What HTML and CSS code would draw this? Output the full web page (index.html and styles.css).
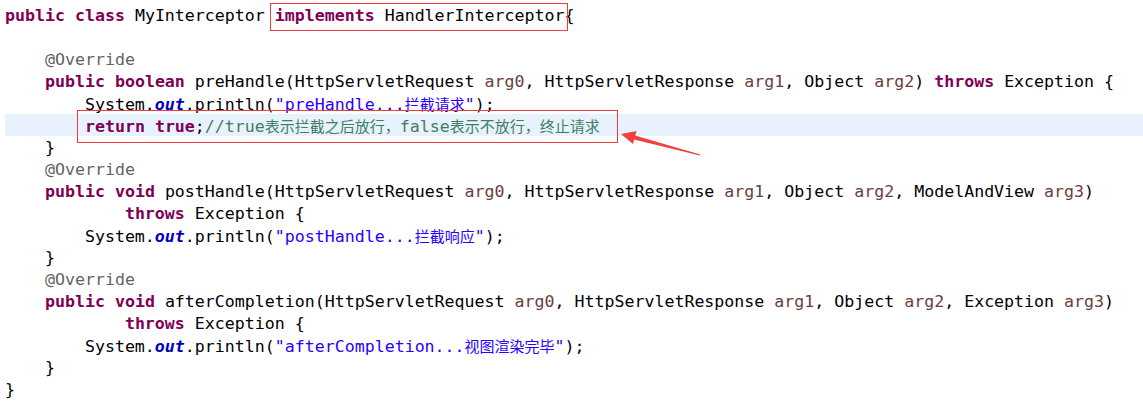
FILE: index.html
```html
<!DOCTYPE html>
<html lang="en">
<head>
    <meta charset="UTF-8">
    <title>MyInterceptor.java</title>
    <link rel="stylesheet" href="styles.css">
</head>
<body>
    <div class="editor">
        <div class="code">
            <div class="line"><span class="kw">public</span> <span class="kw">class</span> MyInterceptor <span class="mark mark-head"><span class="kw">implements</span> HandlerInterceptor</span>{</div>
            <div class="line"></div>
            <div class="line">    <span class="ann">@Override</span></div>
            <div class="line">    <span class="kw">public</span> <span class="kw">boolean</span> preHandle(HttpServletRequest <span class="arg">arg0</span>, HttpServletResponse <span class="arg">arg1</span>, Object <span class="arg">arg2</span>) <span class="kw">throws</span> Exception {</div>
            <div class="line">        System.<span class="field">out</span>.println(<span class="str">"preHandle...<span class="zh">拦截请求</span>"</span>);</div>
            <div class="line current">        <span class="mark mark-return"><span class="kw">return</span> <span class="kw">true</span>;<span class="cmt">//true<span class="zh">表示拦截之后放行，</span>false<span class="zh">表示不放行，终止请求</span></span></span></div>
            <div class="line">    }</div>
            <div class="line">    <span class="ann">@Override</span></div>
            <div class="line">    <span class="kw">public</span> <span class="kw">void</span> postHandle(HttpServletRequest <span class="arg">arg0</span>, HttpServletResponse <span class="arg">arg1</span>, Object <span class="arg">arg2</span>, ModelAndView <span class="arg">arg3</span>)</div>
            <div class="line">            <span class="kw">throws</span> Exception {</div>
            <div class="line">        System.<span class="field">out</span>.println(<span class="str">"postHandle...<span class="zh">拦截响应</span>"</span>);</div>
            <div class="line">    }</div>
            <div class="line">    <span class="ann">@Override</span></div>
            <div class="line">    <span class="kw">public</span> <span class="kw">void</span> afterCompletion(HttpServletRequest <span class="arg">arg0</span>, HttpServletResponse <span class="arg">arg1</span>, Object <span class="arg">arg2</span>, Exception <span class="arg">arg3</span>)</div>
            <div class="line">            <span class="kw">throws</span> Exception {</div>
            <div class="line">        System.<span class="field">out</span>.println(<span class="str">"afterCompletion...<span class="zh">视图渲染完毕</span>"</span>);</div>
            <div class="line">    }</div>
            <div class="line">}</div>
        </div>

        <!-- red annotation arrow pointing at the return line -->
        <svg class="arrow" width="1143" height="419" viewBox="0 0 1143 419">
            <polygon points="700.2,154.5 699.8,155.6 634,139.6 635,135.6" fill="#f0413c"/>
            <polygon points="621,134 636.5,131 633,144" fill="#f0413c"/>
        </svg>
    </div>
</body>
</html>
```

FILE: styles.css
```css
body {
    margin: 0;
    padding: 0;
    background-color: #ffffff;
}

.editor {
    position: relative;
    width: 1143px;
    height: 419px;
    overflow: hidden;
}

.code {
    padding-top: 4px;
    margin-left: 5px;
    font-family: "DejaVu Sans Mono", "Liberation Mono", "Noto Sans CJK SC", monospace;
    font-size: 16.6px;
    color: #000000;
}

.line {
    height: 21px;
    padding-top: 1px;
    line-height: 22px;
    white-space: pre;
}

.line.current {
    background-color: #e8f2fe;
}

.kw {
    color: #7f0055;
    font-weight: bold;
}

.ann {
    color: #646464;
}

.arg {
    color: #6a3e3e;
}

.field {
    color: #0000c0;
    font-weight: bold;
    font-style: italic;
}

.str {
    color: #2a00ff;
}

.cmt {
    color: #3f7f5f;
}

.zh {
    font-family: "Noto Sans CJK SC", sans-serif;
    font-size: 15px;
    font-weight: normal;
}

.mark {
    position: relative;
}

.mark::after {
    content: "";
    position: absolute;
    border: 1.5px solid #f23b3b;
}

.mark-head::after {
    top: -3px;
    bottom: -6px;
    left: -5px;
    right: -3px;
}

.mark-return::after {
    top: -7px;
    bottom: -7px;
    left: -8px;
    right: -18px;
}

.arrow {
    position: absolute;
    top: 0;
    left: 0;
    pointer-events: none;
}
```
